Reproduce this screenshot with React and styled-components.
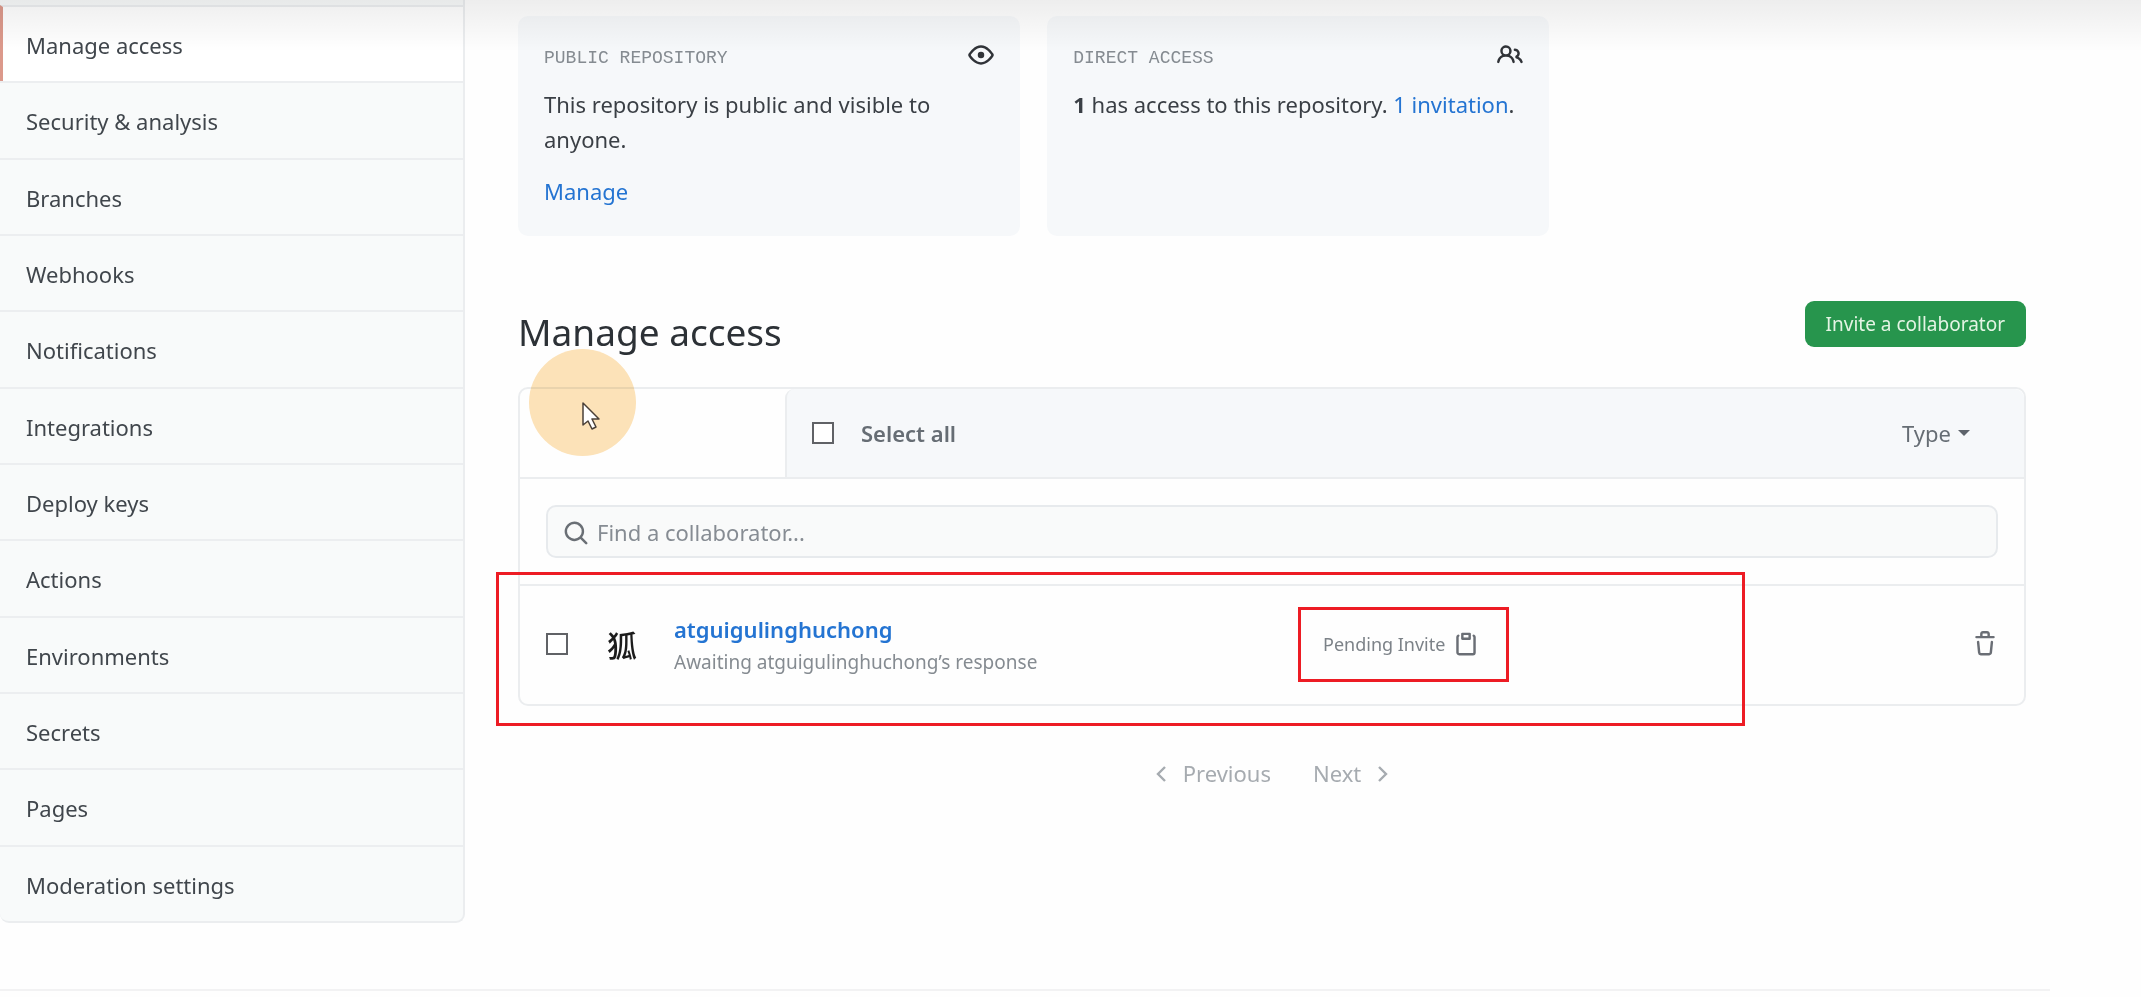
import React from "react";
import styled, { createGlobalStyle } from "styled-components";

const GlobalStyle = createGlobalStyle`
  *, *::before, *::after { box-sizing: border-box; }
  body {
    margin: 0;
    background: #fefefe;
    color: #3a3f45;
    font-family: "Noto Sans", "Open Sans", "Noto Sans CJK SC", sans-serif;
    font-size: 22px;
    line-height: 35px;
  }
  h1, h2, p { margin: 0; font-weight: 400; }
  button, input { font: inherit; color: inherit; }
  a { color: #2474d2; text-decoration: none; }
`;

const Page = styled.div`
  position: relative;
`;

const TopShade = styled.div`
  position: absolute;
  top: 0;
  left: 0;
  right: 0;
  height: 52px;
  background: linear-gradient(rgba(0, 0, 0, 0.065), rgba(0, 0, 0, 0));
  pointer-events: none;
`;

const Layout = styled.div`
  display: flex;
  align-items: flex-start;
  gap: 53px;
  padding-right: 115px;
`;

const Sidebar = styled.nav`
  flex: 0 0 465px;
  display: flex;
  flex-direction: column;
  min-height: 923px;
  padding-top: 5px;
  background: #f8fafa;
  border: solid #ebedef;
  border-width: 0 2px 2px 0;
  border-radius: 0 0 9px 9px;
`;

const NavItem = styled.a`
  flex: 1;
  display: flex;
  align-items: center;
  padding: 3px 24px 0 26px;
  border-top: 2px solid #eceef0;
  color: #40464c;

  &[aria-current="page"] {
    padding-left: 23px;
    border-left: 3px solid #dc998b;
    background: #ffffff;
  }
`;

const Main = styled.main`
  flex: 1;
  min-width: 0;
  padding-top: 16px;
`;

const Cards = styled.div`
  display: grid;
  grid-template-columns: repeat(2, 1fr);
  gap: 27px;
  width: 68.4%;
`;

const Card = styled.section`
  padding: 26px 26px 27px;
  border-radius: 10px;
  background: #f6f8fa;
`;

const CardHead = styled.div`
  display: flex;
  justify-content: space-between;
  align-items: flex-start;
  margin-bottom: 13px;
  color: #303338;
`;

const CardLabel = styled.h2`
  font-family: "Liberation Mono", monospace;
  font-size: 18px;
  line-height: 32px;
  color: #858b91;
`;

const CardText = styled.p`
  & + & { margin-top: 17px; }
`;

const Icon = styled.svg`
  display: block;
  width: 26px;
  height: 26px;
  fill: currentColor;
`;

const TitleRow = styled.div`
  display: flex;
  justify-content: space-between;
  align-items: flex-start;
  margin: 65px 0 24px;
`;

const Title = styled.h1`
  font-size: 37px;
  line-height: 62px;
  color: #2c3136;
`;

const InviteButton = styled.button`
  height: 46px;
  padding: 0 21px;
  border: 0;
  border-radius: 9px;
  background: #27954d;
  color: #e4f4e4;
  font-size: 19px;
`;

const Box = styled.div`
  position: relative;
  border: 2px solid #ebedef;
  border-radius: 10px;
`;

const BoxHeader = styled.div`
  display: flex;
  height: 88px;
`;

const BlankTab = styled.div`
  flex: 0 0 265px;
`;

const SelectBar = styled.div`
  flex: 1;
  display: flex;
  justify-content: space-between;
  align-items: center;
  padding: 0 54px 0 25px;
  border-left: 2px solid #ebedef;
  border-radius: 9px 9px 0 0;
  background: #f6f8fa;
  color: #666d74;
`;

const SelectLabel = styled.label`
  display: flex;
  align-items: center;
  gap: 27px;
  font-weight: 600;
`;

const Checkbox = styled.input.attrs({ type: "checkbox" })`
  appearance: none;
  width: 22px;
  height: 22px;
  margin: 0;
  border: 2px solid #606266;
  background: #ffffff;
`;

const TypeButton = styled.button`
  display: flex;
  align-items: center;
  gap: 7px;
  padding: 0;
  border: 0;
  background: none;
`;

const Caret = styled.span`
  border: 6px solid transparent;
  border-top-color: #5d636b;
  border-bottom: 0;
`;

const SearchArea = styled.div`
  padding: 26px;
  border-top: 2px solid #ebedef;
`;

const SearchField = styled.label`
  display: flex;
  align-items: center;
  gap: 8px;
  height: 53px;
  padding: 2px 15px 0;
  border: 2px solid #e7eaed;
  border-radius: 10px;
  background: #f9fafa;
  color: #6a6f75;
`;

const SearchInput = styled.input`
  flex: 1;
  min-width: 0;
  padding: 0;
  border: 0;
  outline: 0;
  background: none;

  &::placeholder { color: #868c93; opacity: 1; }
`;

const MemberRow = styled.div`
  position: relative;
  display: grid;
  grid-template-columns: 61px 67px 1fr 1fr 26px;
  align-items: center;
  height: 120px;
  padding: 0 26px 2px;
  border-top: 2px solid #ebedef;
`;

const Avatar = styled.span`
  font-family: "Noto Sans CJK SC", sans-serif;
  font-size: 30px;
  font-weight: 500;
  color: #1c1c1c;
`;

const MemberName = styled.a`
  font-weight: 600;
  line-height: 32px;
`;

const MemberNote = styled.p`
  font-size: 19px;
  line-height: 30px;
  color: #858b91;
`;

const Pending = styled.div`
  position: relative;
  justify-self: start;
  display: flex;
  align-items: center;
  gap: 8px;
  font-size: 18px;
  color: #7c8288;
`;

const IconButton = styled.button`
  padding: 0;
  border: 0;
  background: none;
  color: #6a6e75;
`;

const RowMark = styled.div`
  position: absolute;
  inset: -14px 279px -22px -24px;
  border: 3px solid #ed1c24;
  pointer-events: none;
`;

const PendingMark = styled.div`
  position: absolute;
  inset: -20px -30px -20px -25px;
  border: 3px solid #ed1c24;
  pointer-events: none;
`;

const Pagination = styled.nav`
  display: flex;
  justify-content: center;
  gap: 42px;
  padding: 50px 0;
`;

const PageButton = styled.button`
  display: flex;
  align-items: center;
  gap: 12px;
  padding: 0;
  border: 0;
  background: none;
  color: #a6abb0;
`;

const Chevron = styled.svg`
  width: 18px;
  height: 18px;
  fill: none;
  stroke: currentColor;
  stroke-width: 2.4;
`;

const FooterRule = styled.hr`
  margin: 66px 91px 0 0;
  border: 0;
  border-top: 2px solid #f2f2f3;
`;

const Pointer = styled.div`
  position: absolute;
  top: -40px;
  left: 9px;
  width: 107px;
  height: 107px;
  border-radius: 50%;
  background: #fde3b9;
  mix-blend-mode: multiply;
  pointer-events: none;
`;

const Arrow = styled.svg`
  position: absolute;
  top: 13px;
  left: 62px;
  width: 18px;
  height: 28px;
  pointer-events: none;
`;

const ICONS = {
  eye: "M1.679 7.932c.412-.621 1.242-1.75 2.366-2.717C5.175 4.242 6.527 3.5 8 3.5c1.473 0 2.824.742 3.955 1.715 1.124.967 1.954 2.096 2.366 2.717a.119.119 0 010 .136c-.412.621-1.242 1.75-2.366 2.717C10.825 11.758 9.473 12.5 8 12.5c-1.473 0-2.824-.742-3.955-1.715C2.92 9.818 2.09 8.69 1.679 8.068a.119.119 0 010-.136zM8 2c-1.981 0-3.67.992-4.933 2.078C1.797 5.169.88 6.423.43 7.1a1.619 1.619 0 000 1.798c.45.678 1.367 1.932 2.637 3.024C4.329 13.008 6.019 14 8 14c1.981 0 3.67-.992 4.933-2.078 1.27-1.091 2.187-2.345 2.637-3.023a1.619 1.619 0 000-1.798c-.45-.678-1.367-1.932-2.637-3.023C11.671 2.992 9.981 2 8 2zm0 8a2 2 0 100-4 2 2 0 000 4z",
  people: "M5.5 3.5a2 2 0 100 4 2 2 0 000-4zM2 5.5a3.5 3.5 0 115.898 2.549 5.507 5.507 0 013.034 4.084.75.75 0 11-1.482.235 4.001 4.001 0 00-7.9 0 .75.75 0 01-1.482-.236A5.507 5.507 0 013.102 8.05 3.49 3.49 0 012 5.5zM11 4a.75.75 0 100 1.5 1.5 1.5 0 01.666 2.844.75.75 0 00-.416.672v.352a.75.75 0 00.574.73c1.2.289 2.162 1.2 2.522 2.372a.75.75 0 101.434-.44 5.01 5.01 0 00-2.56-3.012A3 3 0 0011 4z",
  search: "M11.5 7a4.499 4.499 0 11-8.998 0A4.499 4.499 0 0111.5 7zm-.82 4.74a6 6 0 111.06-1.06l3.04 3.04a.75.75 0 11-1.06 1.06l-3.04-3.04z",
  trash: "M6.5 1.75a.25.25 0 01.25-.25h2.5a.25.25 0 01.25.25V3h-3V1.75zm4.5 0V3h2.25a.75.75 0 010 1.5H2.75a.75.75 0 010-1.5H5V1.75C5 .784 5.784 0 6.75 0h2.5C10.216 0 11 .784 11 1.75zM4.496 6.675a.75.75 0 10-1.492.15l.66 6.6A1.75 1.75 0 005.405 15h5.19c.9 0 1.652-.681 1.741-1.576l.66-6.6a.75.75 0 00-1.492-.149l-.66 6.6a.25.25 0 01-.249.225h-5.19a.25.25 0 01-.249-.225l-.66-6.6z",
  clipboard: "M5.75 1a.75.75 0 00-.75.75v3c0 .414.336.75.75.75h4.5a.75.75 0 00.75-.75v-3a.75.75 0 00-.75-.75h-4.5zm.75 3V2.5h3V4h-3zm-2.874-.467a.75.75 0 00-.752-1.298A1.75 1.75 0 002 3.75v9.5c0 .966.784 1.75 1.75 1.75h8.5A1.75 1.75 0 0014 13.25v-9.5a1.75 1.75 0 00-.874-1.515.75.75 0 10-.752 1.298.25.25 0 01.126.217v9.5a.25.25 0 01-.25.25h-8.5a.25.25 0 01-.25-.25v-9.5a.25.25 0 01.126-.217z",
};

function Octicon({ name }) {
  return (
    <Icon viewBox="0 0 16 16" aria-hidden="true">
      <path fillRule="evenodd" d={ICONS[name]} />
    </Icon>
  );
}

const NAV = [
  "Manage access",
  "Security & analysis",
  "Branches",
  "Webhooks",
  "Notifications",
  "Integrations",
  "Deploy keys",
  "Actions",
  "Environments",
  "Secrets",
  "Pages",
  "Moderation settings",
];

export default function App() {
  return (
    <Page>
      <GlobalStyle />
      <Layout>
        <Sidebar aria-label="Settings">
          {NAV.map((label, i) => (
            <NavItem key={label} href="#" aria-current={i === 0 ? "page" : undefined}>
              {label}
            </NavItem>
          ))}
        </Sidebar>
        <Main>
          <Cards>
            <Card>
              <CardHead>
                <CardLabel>PUBLIC REPOSITORY</CardLabel>
                <Octicon name="eye" />
              </CardHead>
              <CardText>This repository is public and visible to anyone.</CardText>
              <CardText>
                <a href="#">Manage</a>
              </CardText>
            </Card>
            <Card>
              <CardHead>
                <CardLabel>DIRECT ACCESS</CardLabel>
                <Octicon name="people" />
              </CardHead>
              <CardText>
                <strong>1</strong> has access to this repository. <a href="#">1 invitation</a>.
              </CardText>
            </Card>
          </Cards>

          <TitleRow>
            <Title>Manage access</Title>
            <InviteButton type="button">Invite a collaborator</InviteButton>
          </TitleRow>

          <Box>
            <BoxHeader>
              <BlankTab />
              <SelectBar>
                <SelectLabel>
                  <Checkbox />
                  Select all
                </SelectLabel>
                <TypeButton type="button">
                  Type
                  <Caret />
                </TypeButton>
              </SelectBar>
            </BoxHeader>
            <SearchArea>
              <SearchField>
                <Octicon name="search" />
                <SearchInput
                  type="text"
                  aria-label="Find a collaborator"
                  placeholder="Find a collaborator..."
                />
              </SearchField>
            </SearchArea>
            <MemberRow>
              <Checkbox aria-label="Select atguigulinghuchong" />
              <Avatar>狐</Avatar>
              <div>
                <MemberName href="#">atguigulinghuchong</MemberName>
                <MemberNote>Awaiting atguigulinghuchong’s response</MemberNote>
              </div>
              <Pending>
                Pending Invite
                <IconButton type="button" aria-label="Copy invite link">
                  <Octicon name="clipboard" />
                </IconButton>
                <PendingMark />
              </Pending>
              <IconButton type="button" aria-label="Remove">
                <Octicon name="trash" />
              </IconButton>
              <RowMark />
            </MemberRow>
            <Pointer />
            <Arrow viewBox="0 0 18 28" aria-hidden="true">
              <path
                d="M1 1v22l5-4 4 8 4-2-4-8h7z"
                fill="#fff"
                stroke="#4a4038"
                strokeWidth="1.5"
                strokeLinejoin="round"
              />
            </Arrow>
          </Box>

          <Pagination aria-label="Pagination">
            <PageButton type="button">
              <Chevron viewBox="0 0 18 18" aria-hidden="true">
                <path d="M12 2 5 9l7 7" />
              </Chevron>
              Previous
            </PageButton>
            <PageButton type="button">
              Next
              <Chevron viewBox="0 0 18 18" aria-hidden="true">
                <path d="m6 2 7 7-7 7" />
              </Chevron>
            </PageButton>
          </Pagination>
        </Main>
      </Layout>
      <FooterRule />
      <TopShade />
    </Page>
  );
}
